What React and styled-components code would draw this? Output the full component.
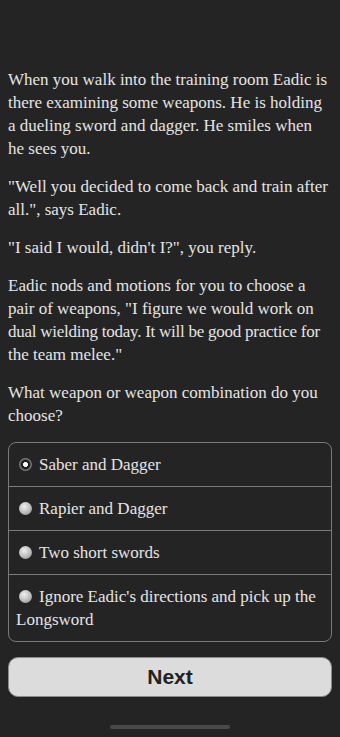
import React, { useState } from "react";
import styled, { createGlobalStyle } from "styled-components";

const Global = createGlobalStyle`
  html, body { margin: 0; padding: 0; background: #242424; }
  body { width: 340px; height: 737px; overflow: hidden; }
`;

const Page = styled.div`
  width: 340px;
  height: 737px;
  background: #242424;
  display: flex;
  flex-direction: column;
  box-sizing: border-box;
  padding: 68px 8px 0;
  font-family: "Liberation Serif", "Times New Roman", serif;
  color: #e4e4e4;
  position: relative;
`;

const Paragraph = styled.p`
  margin: 0 0 15px;
  font-size: 17px;
  line-height: 23px;
`;

const Snug = styled.span`
  letter-spacing: -0.25px;
`;

const Options = styled.div`
  border: 1px solid #7a7a7a;
  border-radius: 8px;
  display: flex;
  flex-direction: column;
`;

const Option = styled.label`
  display: block;
  padding: 10px 8px 10px 7px;
  font-size: 17px;
  line-height: 23px;
  color: #e4e4e4;
  border-top: ${(p) => (p.$first ? "none" : "1px solid #7a7a7a")};
  cursor: pointer;
`;

const Radio = styled.span`
  display: inline-block;
  width: 13px;
  height: 13px;
  border-radius: 50%;
  margin: 0 7px 0 3px;
  vertical-align: -1px;
  box-sizing: border-box;
  background: ${(p) =>
    p.$checked
      ? "radial-gradient(circle at 50% 50%, #fafafa 0 2.2px, #1a1a1a 2.8px 4px, #555 5px, #888 6.5px)"
      : "radial-gradient(circle at 40% 35%, #f0f0f0 0, #c4c4c4 45%, #8a8a8a 100%)"};
`;

const NextButton = styled.button`
  margin-top: 15px;
  height: 40px;
  width: 100%;
  border-radius: 10px;
  border: 1px solid #8a8a8a;
  background: #dcdcdc;
  color: #222;
  font-family: "Liberation Sans", Arial, sans-serif;
  font-weight: bold;
  font-size: 21px;
  padding: 0;
`;

const HomeBar = styled.div`
  position: absolute;
  left: 110px;
  bottom: 8px;
  width: 120px;
  height: 4px;
  border-radius: 2px;
  background: #4a4a4a;
`;

const choices = [
  "Saber and Dagger",
  "Rapier and Dagger",
  "Two short swords",
  "Ignore Eadic's directions and pick up the Longsword",
];

export default function App() {
  const [sel, setSel] = useState(0);
  return (
    <>
      <Global />
      <Page>
        <Paragraph>
          When you walk into the training room Eadic is there examining some
          weapons. He is holding a dueling sword and dagger. He smiles when he
          sees you.
        </Paragraph>
        <Paragraph>
          "Well you decided to come back and train after all.", says Eadic.
        </Paragraph>
        <Paragraph>"I said I would, didn't I?", you reply.</Paragraph>
        <Paragraph>
          Eadic nods and motions for you to choose a pair of weapons, "I figure
          we would work on{" "}
          <Snug>dual wielding today. It will be good practice for</Snug> the
          team melee."
        </Paragraph>
        <Paragraph>What weapon or weapon combination do you choose?</Paragraph>
        <Options>
          {choices.map((c, i) => (
            <Option key={c} $first={i === 0} onClick={() => setSel(i)}>
              <Radio $checked={sel === i} />
              {c}
            </Option>
          ))}
        </Options>
        <NextButton>Next</NextButton>
        <HomeBar />
      </Page>
    </>
  );
}
